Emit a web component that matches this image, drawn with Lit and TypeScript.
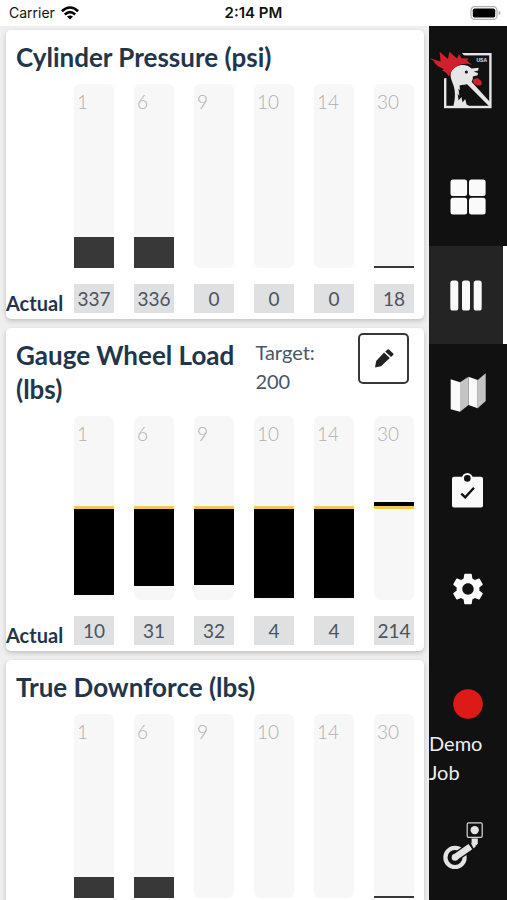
import { LitElement, html, css, svg, nothing, TemplateResult } from "lit";
import { customElement, property, state } from "lit/decorators.js";
import { classMap } from "lit/directives/class-map.js";
import { styleMap } from "lit/directives/style-map.js";

const TRACK_HEIGHT = 184;

interface RowReading {
  row: number;
  value: number;
}

interface Panel {
  title: string;
  max: number;
  target?: number;
  showActual: boolean;
  rows: RowReading[];
}

const ROWS = [1, 6, 9, 10, 14, 30];
const readings = (values: number[]): RowReading[] =>
  values.map((value, i) => ({ row: ROWS[i], value }));

const PANELS: Panel[] = [
  { title: "Cylinder Pressure (psi)", max: 2000, showActual: true, rows: readings([337, 336, 0, 0, 0, 18]) },
  { title: "Gauge Wheel Load (lbs)", max: 400, target: 200, showActual: true, rows: readings([10, 31, 32, 4, 4, 214]) },
  { title: "True Downforce (lbs)", max: 2000, showActual: false, rows: readings([228, 228, 0, 0, 0, 18]) },
];

@customElement("row-gauge")
class RowGauge extends LitElement {
  @property({ type: Number }) row = 0;
  @property({ type: Number }) value = 0;
  @property({ type: Number }) max = 100;
  @property({ type: Number }) target?: number;

  static styles = css`
    :host {
      display: block;
      position: relative;
      height: ${TRACK_HEIGHT}px;
      background: #f7f7f7;
      border-radius: 6px;
    }
    .row {
      display: block;
      padding: 4px 3px;
      font-size: 19px;
      line-height: 28px;
      font-weight: 300;
      color: #b0b0b0;
    }
    .fill {
      position: absolute;
      left: 0;
      right: 0;
      background: #383838;
    }
    .fill.load {
      background: #000;
    }
    .target {
      position: absolute;
      left: 0;
      right: 0;
      height: 3px;
      background: #f0cb50;
    }
  `;

  render() {
    const scale = TRACK_HEIGHT / this.max;
    const base = this.target ?? 0;
    const from = Math.round(Math.min(base, this.value) * scale);
    const size = Math.round(Math.abs(this.value - base) * scale);
    const hasTarget = this.target !== undefined;
    return html`
      <span class="row">${this.row}</span>
      <div
        class=${classMap({ fill: true, load: hasTarget })}
        style=${styleMap({ bottom: `${from}px`, height: `${size}px` })}
      ></div>
      ${hasTarget
        ? html`<div class="target" style=${styleMap({ bottom: `${Math.round(base * scale) - 1}px` })}></div>`
        : nothing}
    `;
  }
}

@customElement("gauge-panel")
class GaugePanel extends LitElement {
  @property({ attribute: false }) panel!: Panel;

  static styles = css`
    :host {
      display: block;
      flex: none;
      background: #fff;
      border-radius: 5px;
      box-shadow: 0 2px 5px rgba(0, 0, 0, 0.2);
      padding-bottom: 6px;
    }
    header {
      display: grid;
      grid-template-columns: minmax(0, 1fr);
      padding: 10px 15px 10px 10px;
    }
    header.targeted {
      grid-template-columns: minmax(0, 7fr) minmax(0, 3fr) 51px;
    }
    h2 {
      margin: 0;
      font-size: 26px;
      line-height: 34px;
      font-weight: 700;
      color: #22364b;
    }
    .goal {
      margin: 0;
      font-size: 20px;
      line-height: 29px;
      color: #4b5663;
    }
    .goal span {
      display: block;
    }
    .edit {
      box-sizing: border-box;
      width: 51px;
      height: 51px;
      margin: -5px 0 0;
      padding: 0;
      display: grid;
      place-items: center;
      background: #fff;
      border: 2px solid #383838;
      border-radius: 5px;
      cursor: pointer;
    }
    .line {
      display: flex;
      padding-right: 10px;
    }
    .label {
      flex: 0 0 68px;
      font-size: 20px;
      line-height: 38px;
      height: 29px;
      font-weight: 700;
      color: #22364b;
    }
    .cells {
      flex: 1;
      display: grid;
      grid-template-columns: repeat(6, minmax(0, 1fr));
      gap: 20px;
    }
    .values {
      margin-top: 16px;
    }
    .value {
      height: 29px;
      line-height: 29px;
      font-size: 19px;
      text-align: center;
      background: #dfe0e1;
      color: #4b5460;
    }
  `;

  render() {
    const { title, max, target, rows, showActual } = this.panel;
    const targeted = target !== undefined;
    return html`
      <header class=${classMap({ targeted })}>
        <h2>${title}</h2>
        ${targeted
          ? html`
              <p class="goal"><span>Target:</span><span>${target}</span></p>
              <button class="edit" type="button" aria-label="Edit target">
                <svg width="20" height="20" viewBox="0 0 20 20" fill="#222" aria-hidden="true">
                  <path d="M1 18.6 2.2 12 10 3.6 15.8 9 7 17.2Z" />
                  <path d="M11.2 2.4 13.6.4Q14.3 0 15 .6L19.2 4.6Q19.8 5.3 19.2 6L17 8Z" />
                </svg>
              </button>
            `
          : nothing}
      </header>
      <div class="line">
        <div class="label"></div>
        <div class="cells">
          ${rows.map(
            (r) => html`<row-gauge .row=${r.row} .value=${r.value} .max=${max} .target=${target}></row-gauge>`
          )}
        </div>
      </div>
      ${showActual
        ? html`
            <div class="line values">
              <div class="label">Actual</div>
              <div class="cells">${rows.map((r) => html`<div class="value">${r.value}</div>`)}</div>
            </div>
          `
        : nothing}
    `;
  }
}

interface NavItem {
  id: string;
  label: string;
  width: number;
  height: number;
  art: TemplateResult<2>;
}

const NAV: NavItem[] = [
  {
    id: "dashboard",
    label: "Dashboard",
    width: 36,
    height: 36,
    art: svg`
      <rect x="0.5" y="0.5" width="16.6" height="16.6" rx="2.5" />
      <rect x="19" y="0.5" width="16.6" height="16.6" rx="2.5" />
      <rect x="0.5" y="18.8" width="16.6" height="16.6" rx="2.5" />
      <rect x="19" y="18.8" width="16.6" height="16.6" rx="2.5" />`,
  },
  {
    id: "rows",
    label: "Rows",
    width: 32,
    height: 31,
    art: svg`
      <rect x="0.3" y="0.5" width="8" height="30" rx="2.6" />
      <rect x="12" y="0.5" width="8" height="30" rx="2.6" />
      <rect x="23.7" y="0.5" width="8" height="30" rx="2.6" />`,
  },
  {
    id: "map",
    label: "Map",
    width: 36,
    height: 40,
    art: svg`
      <path d="M.7 6.3 10 9.3V38.7L.7 36.3Z" />
      <path d="M18.5 3.7 27.7 7V35.3L18.5 32Z" />
      <path fill="#c4c4c4" d="M10 9.3 18.5 3.7V32L10 38.7Z" />
      <path fill="#c4c4c4" d="M27.7 7 35.7.3V28L27.7 35.3Z" />`,
  },
  {
    id: "jobs",
    label: "Jobs",
    width: 36,
    height: 36,
    art: svg`
      <rect x="2" y="3.7" width="31" height="30.8" rx="2" />
      <circle cx="17.3" cy="5.4" r="5.4" />
      <circle cx="17.3" cy="5.4" r="3.3" fill="#111" />
      <path d="M11.3 20.6 15.2 24.3 24 14.8" fill="none" stroke="#111" stroke-width="2.4" />`,
  },
  {
    id: "settings",
    label: "Settings",
    width: 38,
    height: 38,
    art: svg`
      <path transform="scale(1.5833)" d="M19.14 12.94c.04-.3.06-.61.06-.94 0-.32-.02-.64-.07-.94l2.03-1.58c.18-.14.23-.41.12-.61l-1.92-3.32c-.12-.22-.37-.29-.59-.22l-2.39.96c-.5-.38-1.03-.7-1.62-.94l-.36-2.54c-.04-.24-.24-.41-.48-.41h-3.84c-.24 0-.43.17-.47.41l-.36 2.54c-.59.24-1.13.57-1.62.94l-2.39-.96c-.22-.08-.47 0-.59.22L2.74 8.87c-.12.21-.08.47.12.61l2.03 1.58c-.05.3-.09.63-.09.94s.02.64.07.94l-2.03 1.58c-.18.14-.23.41-.12.61l1.92 3.32c.12.22.37.29.59.22l2.39-.96c.5.38 1.03.7 1.62.94l.36 2.54c.05.24.24.41.48.41h3.84c.24 0 .44-.17.47-.41l.36-2.54c.59-.24 1.13-.56 1.62-.94l2.39.96c.22.08.47 0 .59-.22l1.92-3.32c.12-.22.07-.47-.12-.61l-2.01-1.58zM12 15.6c-1.98 0-3.6-1.62-3.6-3.6s1.62-3.6 3.6-3.6 3.6 1.62 3.6 3.6-1.62 3.6-3.6 3.6z" />`,
  },
];

@customElement("side-nav")
class SideNav extends LitElement {
  @state() private active = "rows";

  static styles = css`
    :host {
      display: flex;
      flex-direction: column;
      flex: 0 0 78px;
      background: #111;
      color: #eee;
    }
    svg {
      display: block;
    }
    .logo {
      display: grid;
      justify-items: start;
      padding: 25px 0 38px 1px;
    }
    .mark {
      font-family: "Liberation Sans", Arial, sans-serif;
      font-size: 5px;
      font-weight: 700;
    }
    button {
      display: grid;
      place-items: center;
      box-sizing: border-box;
      width: 100%;
      margin: 0;
      padding: 0;
      border: 0;
      background: none;
      color: #fafafa;
      font: inherit;
      cursor: pointer;
    }
    .item {
      height: 98px;
    }
    .item.active {
      background: #242424;
      border-right: 4px solid #fff;
    }
    .record {
      margin-top: 51px;
    }
    .job {
      margin: 10px 0 0;
      font-size: 20px;
      line-height: 29px;
    }
    .implement {
      margin-top: 33px;
      justify-items: start;
      padding-left: 14px;
    }
  `;

  render() {
    return html`
      <a class="logo" href="#home" aria-label="Home">
        <svg width="63" height="59" viewBox="0 0 63 59">
          <rect x="15.2" y="3.2" width="45.2" height="52.8" fill="#111" stroke="#e6e6e6" stroke-width="2.4" />
          <path fill="#111" d="M8 0H30L43 14 20 26 12 28Z" />
          <path
            fill="#e6e6e6"
            d="M21 21C25 13 36 12 41.5 17.4L48.6 16.8 48.2 19.6 43.6 20.8 48 22 47.6 24.2 42.8 25.4C43.2 28.4 42 31 39.6 32.4 36 34 32 33.4 29.6 34.4L30 39.6 28.4 37.4 29.4 45 27.6 42.4 28.6 49.6 31.4 46 32.6 51.6 35.2 48 36.6 53.6 41 56H23.2C25.8 46 25.4 38.6 22.6 32 21 28 19.8 24.6 21 21Z"
          />
          <path fill="#e6e6e6" d="M36.6 32.8 40.4 29.6 60.4 51.4V56.6Z" />
          <path
            fill="#d0202e"
            d="M-.6 7 10.6 10.6 9.6.8 18 8 19.4.8 27 7.4 29 3.2 31.6 7.2 38.2 7.6 37.2 9.8 42 14C37 11.8 32 12.6 28.2 14.4 23.6 16.6 20.4 20.6 18.8 25.6 17.4 22.4 15.2 20.6 12.2 19.8L14 18C9.4 16.4 5.6 13.6 3.4 10.4L5.4 10.6C3.2 9.8 1 8.4-.6 7Z"
          />
          <circle cx="36.4" cy="21" r="1.5" fill="#111" />
          <path fill="#d0202e" d="M43 29.4C44.4 26.4 48 26.8 50.6 29.4 53 32 51.6 34.8 48.6 34.6 46 34.4 42.8 32.4 43 29.4Z" />
          <text class="mark" x="46.5" y="11.4" fill="#e6e6e6">USA</text>
        </svg>
      </a>
      <nav>
        ${NAV.map(
          (n) => html`
            <button
              type="button"
              class=${classMap({ item: true, active: n.id === this.active })}
              aria-label=${n.label}
              @click=${() => (this.active = n.id)}
            >
              <svg width=${n.width} height=${n.height} viewBox="0 0 ${n.width} ${n.height}" fill="currentColor">
                ${n.art}
              </svg>
            </button>
          `
        )}
      </nav>
      <button class="record" type="button" aria-label="Record">
        <svg width="30" height="30" viewBox="0 0 30 30"><circle cx="15" cy="15" r="14.8" fill="#dc1a17" /></svg>
      </button>
      <p class="job">Demo Job</p>
      <button class="implement" type="button" aria-label="Implement">
        <svg width="40" height="50" viewBox="0 0 40 50" fill="#e4e4e4">
          <rect x="24.2" y="2.8" width="15" height="14.6" rx="1.4" fill="none" stroke="#d8d8d8" stroke-width="1.2" />
          <circle cx="31.7" cy="10.1" r="4.2" />
          <path d="M28.6 18.6H34.8V23.2Q34 26 31.4 26.2L28.6 23Z" />
          <circle cx="12" cy="37.4" r="9.6" fill="none" stroke="#e4e4e4" stroke-width="4.2" />
          <path d="M14 36 27 27" fill="none" stroke="#111" stroke-width="9" />
          <path d="M12 37.4 27.4 26.6" fill="none" stroke="#e4e4e4" stroke-width="6.6" />
          <circle cx="12" cy="37.4" r="3.3" />
          <path d="M27.6 22.6 33 26 30.6 28.6Z" />
        </svg>
      </button>
    `;
  }
}

@customElement("app-root")
class AppRoot extends LitElement {
  static styles = css`
    :host {
      display: flex;
      flex-direction: column;
      height: 100vh;
      overflow: hidden;
      background: #efefef;
      font-family: Lato, "Open Sans", sans-serif;
    }
    .status {
      flex: none;
      display: grid;
      grid-template-columns: 1fr auto 1fr;
      align-items: center;
      height: 26px;
      padding: 0 6px;
      background: #fff;
      color: #111;
      font-family: Inter, sans-serif;
      font-size: 14px;
      line-height: 26px;
    }
    .carrier {
      display: flex;
      align-items: center;
      gap: 6px;
      padding-left: 3px;
    }
    .time {
      font-size: 15px;
      font-weight: 600;
    }
    .battery {
      justify-self: end;
    }
    .body {
      flex: 1;
      min-height: 0;
      display: flex;
    }
    main {
      flex: 1;
      min-width: 0;
      display: flex;
      flex-direction: column;
      gap: 9px;
      padding: 4px 5px 0 6px;
      overflow-y: auto;
      scrollbar-width: none;
    }
  `;

  render() {
    return html`
      <div class="status">
        <div class="carrier">
          <span>Carrier</span>
          <svg width="18" height="14" viewBox="0 0 18 14" fill="none" stroke="#000" stroke-width="2.6">
            <path d="M.9 5.2Q9-2.2 17.1 5.2" />
            <path d="M3.8 8.5Q9 3.8 14.2 8.5" />
            <path d="M9 13.6 6 10.6Q9 8.2 12 10.6Z" fill="#000" stroke="none" />
          </svg>
        </div>
        <span class="time">2:14 PM</span>
        <svg class="battery" width="31" height="14" viewBox="0 0 31 14">
          <rect x="1" y="0.7" width="26" height="12.6" rx="3.6" fill="#fff" stroke="#b0b0b0" stroke-width="1.2" />
          <rect x="2.8" y="2.4" width="22.4" height="9.2" rx="1.8" fill="#000" />
          <path d="M28.6 4.8Q30.6 5.6 30.6 7T28.6 9.2Z" fill="#b0b0b0" />
        </svg>
      </div>
      <div class="body">
        <main>${PANELS.map((p) => html`<gauge-panel .panel=${p}></gauge-panel>`)}</main>
        <side-nav></side-nav>
      </div>
    `;
  }
}
